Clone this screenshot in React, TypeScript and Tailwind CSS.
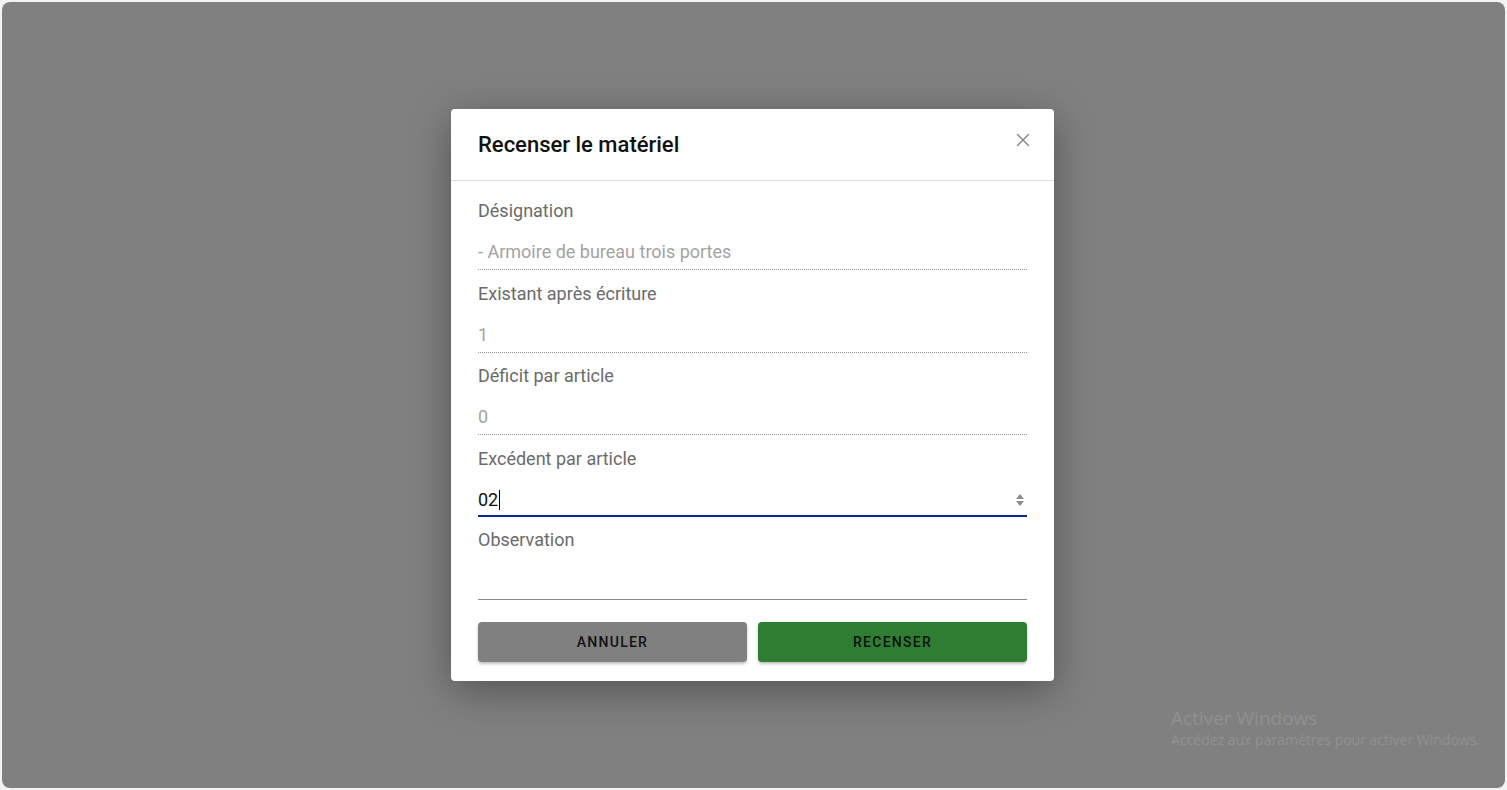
import { X } from 'lucide-react'

type Field = { label: string; value: string; gap: string }

const readOnlyFields: Field[] = [
  { label: 'Désignation', value: '- Armoire de bureau trois portes', gap: 'mb-[12px]' },
  { label: 'Existant après écriture', value: '1', gap: 'mb-[11px]' },
  { label: 'Déficit par article', value: '0', gap: 'mb-[11px]' },
]

function FieldLabel({ children }: { children: string }) {
  return <div className="h-6 text-[18px] leading-6 text-[#6b6b6b]">{children}</div>
}

export default function App() {
  return (
    <div className="h-screen w-full bg-[#f3f3f3] p-[2px] font-['Roboto',sans-serif]">
      <div className="relative flex h-full items-center justify-center rounded-lg bg-[#808080]">
        <div className="mr-[2px] w-[603px] rounded bg-white shadow-[0_10px_40px_rgba(0,0,0,0.35)]">
          <div className="flex items-center justify-between border-b border-[#e0e0e0] pl-[27px] pr-[20px] pt-[22px] pb-[21px]">
            <h2 className="text-[22px] leading-7 font-medium text-[#111]">Recenser le matériel</h2>
            <button className="-mt-[10px] text-[#8a8a8a]">
              <X className="h-[22px] w-[22px]" strokeWidth={1.6} />
            </button>
          </div>

          <div className="px-[27px] pt-[18px] pb-[19px]">
            {readOnlyFields.map((f) => (
              <div key={f.label} className={f.gap}>
                <FieldLabel>{f.label}</FieldLabel>
                <div className="mt-[17px] h-[30px] border-b border-dotted border-[#9a9a9a] pb-[6px] text-[18px] leading-6 text-[#a3a3a3]">
                  {f.value}
                </div>
              </div>
            ))}

            <div className="mb-[11px] pt-px">
              <FieldLabel>Excédent par article</FieldLabel>
              <div className="mt-[17px] flex h-[29px] items-start justify-between border-b-2 border-[#0b2a8e] pb-[6px]">
                <div className="flex items-center text-[18px] leading-6 text-[#111]">
                  02<span className="ml-px inline-block h-[20px] w-px bg-black" />
                </div>
                <svg width="10" height="16" viewBox="0 0 10 16" className="mt-[4px] mr-[2px]">
                  <path d="M1 7 L5 2 L9 7 Z" fill="#8c8c8c" />
                  <path d="M1 9 L5 14 L9 9 Z" fill="#8c8c8c" />
                </svg>
              </div>
            </div>

            <div>
              <FieldLabel>Observation</FieldLabel>
              <div className="mt-[17px] h-[31px] border-b border-[#8c8c8c]" />
            </div>

            <div className="mt-[22px] flex gap-[11px]">
              <button className="h-10 flex-1 rounded bg-[#808080] text-[14px] font-medium tracking-[0.09em] text-[#111] shadow-[0_2px_3px_rgba(0,0,0,0.25)]">
                ANNULER
              </button>
              <button className="h-10 flex-1 rounded bg-[#2e7d32] text-[14px] font-medium tracking-[0.09em] text-[#111] shadow-[0_2px_3px_rgba(0,0,0,0.25)]">
                RECENSER
              </button>
            </div>
          </div>
        </div>

        <div className="absolute bottom-[38px] left-[1169px] font-['Open_Sans',sans-serif] text-[#909090]">
          <div className="text-[19px] leading-6">Activer Windows</div>
          <div className="text-[14px] leading-5">Accédez aux paramètres pour activer Windows.</div>
        </div>
      </div>
    </div>
  )
}
